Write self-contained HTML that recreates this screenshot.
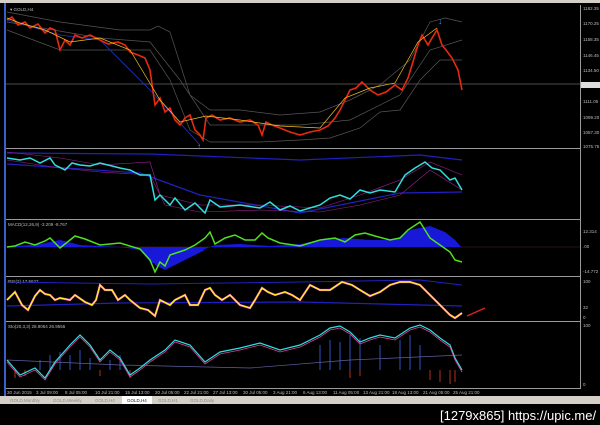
<!DOCTYPE html>
<html><head><meta charset="utf-8"><style>
html,body{margin:0;padding:0;background:#000;width:600px;height:425px;overflow:hidden;font-family:"Liberation Sans",sans-serif}
svg{position:absolute;left:0;top:0}
.t{font-size:4.5px;fill:#bbb}
</style></head><body>
<svg width="600" height="425" viewBox="0 0 600 425">
<rect width="600" height="425" fill="#000"/>
<!-- top bar -->
<rect x="0" y="0" width="600" height="3" fill="#d4d0c8"/>
<rect x="4" y="3" width="2" height="393" fill="#3a5fcd"/>
<!-- panel borders -->
<g stroke="#9a9a9a" stroke-width="1" fill="none">
<line x1="6" y1="148.5" x2="580" y2="148.5"/>
<line x1="6" y1="219.5" x2="580" y2="219.5"/>
<line x1="6" y1="276.5" x2="580" y2="276.5"/>
<line x1="6" y1="321.5" x2="580" y2="321.5"/>
<line x1="6" y1="388.5" x2="580" y2="388.5"/>
<line x1="580.5" y1="5" x2="580.5" y2="389"/>
</g>
<line x1="6" y1="84" x2="580" y2="84" stroke="#666" stroke-width="0.7"/>
<!-- bollinger main -->
<g fill="none" stroke="#555" stroke-width="0.7">
<polyline points="7,12 60,22 120,30 150,30 158,26 170,32 190,95 210,110 240,110 280,115 320,112 350,100 380,85 410,60 430,22 445,18 462,22"/>
<polyline points="7,30 60,50 120,50 150,50 170,80 190,130 210,142 260,142 300,140 330,138 360,128 380,112 400,110 420,80 440,60 462,60"/>
<polyline points="7,22 100,38 150,42 180,80 210,125 300,125 350,120 400,95 430,50 462,40"/>
</g>
<polyline points="7,20 60,35 100,40 150,90 200,145" fill="none" stroke="#2233bb" stroke-width="0.8"/>
<!-- price -->
<polyline fill="none" stroke="#e82a10" stroke-width="1.6" points="7,20 12,17 18,25 25,22 30,28 38,24 45,33 50,28 55,30 60,50 65,40 70,45 75,35 82,38 90,35 100,40 108,44 118,42 125,45 130,52 138,55 145,58 150,70 155,105 160,98 165,112 170,108 175,120 180,125 185,118 190,115 195,130 200,135 203,140 206,118 212,115 220,120 230,118 240,122 250,120 258,125 262,135 266,122 272,125 280,128 290,132 300,135 310,132 320,130 328,126 335,118 340,110 345,100 350,90 356,88 362,82 370,90 378,95 386,92 395,85 402,90 408,78 412,65 418,45 422,35 428,45 432,38 437,30 442,45 446,50 452,58 458,70 462,90"/>
<polyline fill="none" stroke="#f5c020" stroke-width="0.7" points="7,18 20,23 45,30 70,42 100,38 130,50 160,100 180,122 206,116 240,120 280,126 320,128 345,98 370,88 395,83 418,42 437,28"/>
<text x="438" y="24" font-size="9" fill="#3a8ef0">↓</text>
<text x="197" y="149" font-size="8" fill="#3a8ef0">↑</text>
<text x="10" y="11" class="t" fill="#ccc">▾ GOLD,H4</text>
<!-- right axis labels -->
<g class="t">
<text x="583" y="10">1182.35</text><text x="583" y="25">1170.25</text><text x="583" y="41">1158.35</text>
<text x="583" y="57">1146.45</text><text x="583" y="72">1134.50</text><text x="583" y="103">1111.05</text>
<text x="583" y="119">1099.20</text><text x="583" y="134">1087.30</text><text x="583" y="148">1075.75</text>
<text x="583" y="233">12.314</text><text x="583" y="248">.00</text><text x="583" y="273">-14.772</text>
<text x="583" y="283">100</text><text x="583" y="309">32</text><text x="583" y="319">0</text>
<text x="583" y="327">100</text><text x="583" y="386">0</text>
</g>
<rect x="581" y="82" width="19" height="6" fill="#ddd"/>
<!-- panel 2 -->
<g fill="none">
<polyline stroke="#2020c0" stroke-width="1.2" points="7,153 150,154 300,160 420,155 462,160"/>
<polyline stroke="#2020c0" stroke-width="1.2" points="7,164 140,173 200,195 300,213 400,193 462,192"/>
<polyline stroke="#a02090" stroke-width="0.6" points="7,152 60,158 100,165 150,162 160,195 200,205 260,205 320,208 360,195 400,180 430,162 462,175"/>
<polyline stroke="#a02090" stroke-width="0.6" points="7,160 60,168 100,172 150,175 165,205 200,212 260,210 320,212 360,205 400,195 430,170 462,190"/>
<polyline stroke="#30e0e0" stroke-width="1.5" points="7,158 20,160 30,158 40,163 50,158 55,165 65,170 72,163 80,165 90,166 100,163 120,168 130,170 140,175 150,175 155,200 160,195 170,205 175,198 185,210 195,203 205,213 210,200 220,207 240,205 260,208 270,202 280,210 290,206 300,211 320,205 330,198 340,195 350,199 360,190 370,193 380,190 395,192 405,175 415,168 425,162 432,168 440,170 450,180 455,178 462,190"/>
</g>
<!-- MACD -->
<text x="8" y="226" class="t">MACD(12,26,9) -3.209 -8.767</text>
<line x1="6" y1="247" x2="580" y2="247" stroke="#5a2030" stroke-width="0.6"/>
<path d="M7,247 L40,244 60,240 80,245 100,246 120,247 140,250 150,262 160,265 170,258 185,255 200,251 215,245 240,244 270,246 300,244 320,240 345,238 370,240 395,240 410,230 430,226 445,232 455,240 462,248 L462,247 Z" fill="#1818d8"/>
<path d="M150,247 L155,265 165,270 185,260 205,250 Z" fill="#1818d8"/>
<polyline fill="none" stroke="#50e020" stroke-width="1.5" points="7,247 15,246 25,242 35,245 45,241 50,238 55,243 60,248 70,240 75,236 85,239 100,245 120,243 140,249 150,260 155,272 160,262 165,266 170,255 185,250 195,245 205,238 210,232 215,244 225,238 235,235 245,240 255,240 262,233 268,238 280,243 300,246 320,240 335,238 345,242 355,235 365,233 375,236 390,240 400,238 408,230 420,222 430,238 440,245 450,252 455,260 462,262"/>
<!-- RSI -->
<text x="8" y="283" class="t">RSI(2) 17.5627</text>
<polyline fill="none" stroke="#2020c0" stroke-width="1.2" points="7,306 120,303 300,302 462,306"/>
<polyline fill="none" stroke="#2020c0" stroke-width="1" points="7,282 150,284 300,282 420,280 462,285"/>
<polyline fill="none" stroke="#e040e0" stroke-width="2.2" points="7,300 15,292 22,305 28,310 35,296 40,290 45,294 50,295 55,300 60,298 70,300 75,295 85,302 92,305 96,300 100,285 105,290 112,290 118,300 125,295 130,300 140,308 148,310 155,316 160,300 170,305 175,300 185,295 190,305 198,305 205,290 210,288 215,295 222,300 230,295 240,305 250,308 255,300 262,288 268,292 275,295 285,292 292,295 300,300 310,285 320,290 330,290 342,282 352,285 360,290 370,296 380,292 390,285 400,282 410,282 420,285 430,295 440,305 450,315 455,318 462,313"/>
<polyline fill="none" stroke="#ffee20" stroke-width="1.4" points="7,300 15,292 22,305 28,310 35,296 40,290 45,294 50,295 55,300 60,298 70,300 75,295 85,302 92,305 96,300 100,285 105,290 112,290 118,300 125,295 130,300 140,308 148,310 155,316 160,300 170,305 175,300 185,295 190,305 198,305 205,290 210,288 215,295 222,300 230,295 240,305 250,308 255,300 262,288 268,292 275,295 285,292 292,295 300,300 310,285 320,290 330,290 342,282 352,285 360,290 370,296 380,292 390,285 400,282 410,282 420,285 430,295 440,305 450,315 455,318 462,313"/>
<line x1="467" y1="316" x2="485" y2="308" stroke="#e02020" stroke-width="1.5"/>
<!-- Stoch -->
<text x="8" y="328" class="t">Sto(20,3,3) 28.8064 26.9556</text>
<g stroke-width="1">
<path d="M40,360v10M50,355v15M60,352v18M70,355v15M80,350v20M90,358v12M110,360v10M120,355v15M320,345v25M330,340v30M340,342v28M350,335v35M360,338v32M380,345v25M400,340v30M410,335v35M420,345v25" stroke="#3050c0"/>
<path d="M15,370v8M25,370v6M100,370v6M130,370v8M350,370v8M360,370v6M430,370v10M440,370v12M450,370v14M455,370v12" stroke="#b03020"/>
</g>
<polyline fill="none" stroke="#6060a0" stroke-width="0.7" points="7,360 120,365 250,368 350,360 462,355"/>
<polyline fill="none" stroke="#30e0e0" stroke-width="1.2" points="7,360 20,375 35,368 45,378 55,362 70,345 80,335 90,345 100,360 110,350 120,358 130,375 140,368 150,360 165,350 175,340 190,345 205,362 220,352 240,348 260,343 280,350 300,345 320,335 330,328 340,326 350,332 360,342 370,338 380,335 395,338 410,328 420,325 430,330 440,338 450,345 455,358 462,370"/>
<polyline fill="none" stroke="#e040a0" stroke-width="0.8" points="7,362 20,377 35,370 45,380 55,364 70,347 80,337 90,347 100,362 110,352 120,360 130,377 140,370 150,362 165,352 175,342 190,347 205,364 220,354 240,350 260,345 280,352 300,347 320,337 330,330 340,328 350,334 360,344 370,340 380,337 395,340 410,330 420,327 430,332 440,340 450,347 455,360 462,372"/>
<!-- time axis -->
<g class="t">
<text x="7" y="394">30 Jun 2015</text><text x="36" y="394">3 Jul 09:00</text><text x="65" y="394">8 Jul 05:00</text>
<text x="95" y="394">10 Jul 21:00</text><text x="125" y="394">15 Jul 13:00</text><text x="155" y="394">20 Jul 05:00</text>
<text x="184" y="394">22 Jul 21:00</text><text x="213" y="394">27 Jul 13:00</text><text x="243" y="394">30 Jul 05:00</text>
<text x="273" y="394">3 Aug 21:00</text><text x="303" y="394">6 Aug 13:00</text><text x="333" y="394">11 Aug 05:00</text>
<text x="363" y="394">13 Aug 21:00</text><text x="392" y="394">18 Aug 13:00</text><text x="423" y="394">21 Aug 05:00</text>
<text x="453" y="394">25 Aug 21:00</text>
</g>
<!-- tab bar -->
<rect x="0" y="396" width="600" height="8" fill="#d4d0c8"/>
<rect x="122" y="396" width="30" height="8" fill="#fff"/>
<g font-size="4.5" fill="#888">
<text x="10" y="402">GOLD,Monthly</text><text x="53" y="402">GOLD,Weekly</text><text x="95" y="402">GOLD,H4</text>
<text x="127" y="402" fill="#222">GOLD,H4</text><text x="158" y="402">GOLD,H1</text><text x="190" y="402">GOLD,Daily</text>
</g>
<text x="440" y="420" font-size="13" fill="#fff" font-family="Liberation Sans, sans-serif">[1279x865] https://upic.me/</text>
</svg>
</body></html>
